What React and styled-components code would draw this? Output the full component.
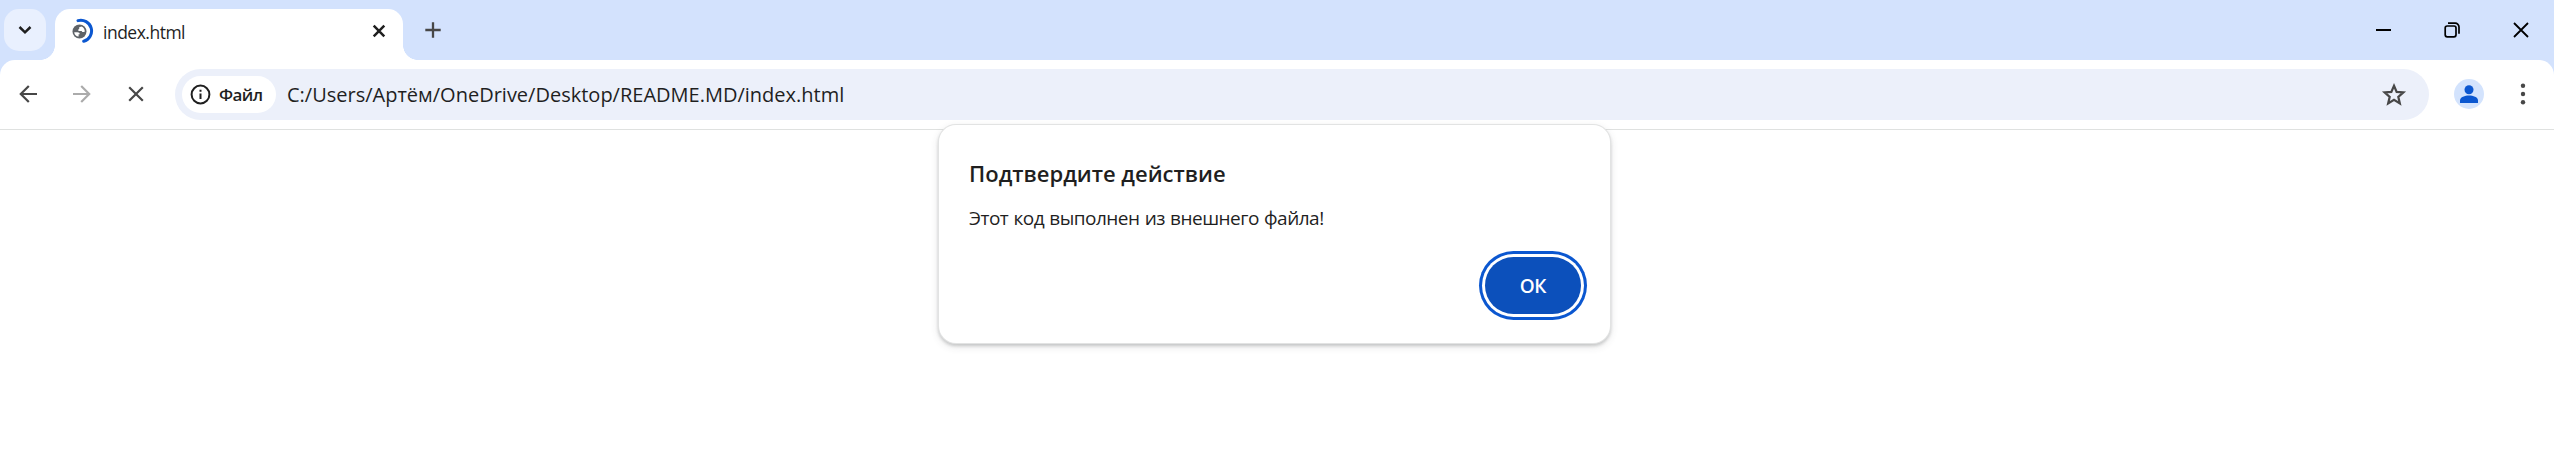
import React from "react";
import styled, { createGlobalStyle } from "styled-components";

const GlobalStyle = createGlobalStyle`
  *, *::before, *::after { box-sizing: border-box; }
  html, body { margin: 0; background: #fff; overflow: hidden; }
  body { font-family: "Segoe UI", "Open Sans", "Noto Sans", sans-serif; color: #1f1f1f; }
  button { font: inherit; color: inherit; border: 0; padding: 0; background: none; }
`;

const Window = styled.div`
  position: relative;
  height: 456px;
  background: #fff;
`;

const TabStrip = styled.header`
  display: flex;
  align-items: flex-start;
  height: 75px;
  margin-bottom: -15px;
  padding: 9px 0 0 4px;
  background: #d3e2fd;
`;

const TabSearch = styled.button`
  display: grid;
  place-items: center;
  width: 42px;
  height: 42px;
  border-radius: 15px;
  background: #e9f0fe;
`;

const Tab = styled.div`
  position: relative;
  z-index: 1;
  display: flex;
  align-items: center;
  width: 348px;
  height: 51px;
  margin-left: 9px;
  padding: 0 17px 8px 16px;
  border-radius: 15px 15px 0 0;
  background: #fff;

  &::before, &::after {
    content: "";
    position: absolute;
    bottom: 0;
    width: 15px;
    height: 15px;
  }
  &::before {
    right: 100%;
    background: radial-gradient(circle at 0 0, transparent 14.6px, #fff 15.2px);
  }
  &::after {
    left: 100%;
    background: radial-gradient(circle at 100% 0, transparent 14.6px, #fff 15.2px);
  }
`;

const TabTitle = styled.span`
  flex: 1;
  margin: 2px 0 0 8px;
  font-size: 17.5px;
  line-height: 24px;
  letter-spacing: -0.5px;
`;

const NewTab = styled.button`
  display: grid;
  place-items: center;
  width: 42px;
  height: 42px;
  margin-left: 9px;
`;

const WindowControls = styled.div`
  display: flex;
  align-items: center;
  height: 41px;
  margin-left: auto;
`;

const ControlButton = styled.button`
  display: grid;
  place-items: center;
  width: ${(p) => p.$width}px;
  height: 41px;
`;

const Toolbar = styled.nav`
  position: relative;
  display: flex;
  align-items: center;
  height: 70px;
  padding: 0 10px 1px 7px;
  border-bottom: 1px solid #dfe1e0;
  border-radius: 15px 15px 0 0;
  background: #fff;
`;

const NavButton = styled.button`
  display: grid;
  place-items: center;
  width: 42px;
  height: 42px;
  margin-right: ${(p) => p.$gap ?? 12}px;
  color: ${(p) => (p.$muted ? "#ababab" : "#474747")};
`;

const AddressBar = styled.div`
  display: flex;
  flex: 1;
  align-items: center;
  height: 51px;
  margin-top: 1px;
  padding: 0 14px 0 7px;
  border-radius: 26px;
  background: #ecf0fa;
`;

const SiteChip = styled.span`
  display: flex;
  flex: none;
  align-items: center;
  gap: 8px;
  width: 94px;
  height: 37px;
  padding-left: 8px;
  border-radius: 19px;
  background: #fff;
  font-size: 17px;
  font-weight: 600;
  letter-spacing: -0.6px;
`;

const Url = styled.span`
  flex: 1;
  margin-left: 11px;
  font-size: 20px;
  line-height: 28px;
  letter-spacing: 0;
  white-space: nowrap;
`;

const Avatar = styled.span`
  display: block;
  width: 30px;
  height: 30px;
  margin: 0 18px 0 25px;
  border-radius: 50%;
  background: #d3e3fd;
`;

const Dialog = styled.section`
  position: absolute;
  top: 125px;
  left: 939px;
  display: flex;
  flex-direction: column;
  width: 671px;
  height: 218px;
  padding: 31px 29px 29px 30px;
  border-radius: 17px;
  background: #fff;
  box-shadow: 0 0 0 1px #e2e3e3, 0 2px 3px 1px rgba(60, 64, 67, 0.2), 0 3px 8px rgba(60, 64, 67, 0.16);
`;

const DialogTitle = styled.h1`
  margin: 0;
  font-size: 22px;
  font-weight: 600;
  line-height: 34px;
  white-space: nowrap;
`;

const DialogMessage = styled.p`
  margin: 14px 0 0;
  font-size: 19px;
  line-height: 28px;
  letter-spacing: -0.5px;
  word-spacing: 0.7px;
  white-space: nowrap;
`;

const ConfirmButton = styled.button`
  && {
    align-self: flex-end;
    width: 96px;
    height: 57px;
    margin-top: auto;
    border-radius: 29px;
    background: #0c50bb;
    box-shadow: 0 0 0 3px #fff, 0 0 0 6px #0b57d0;
    color: #fff;
    font-size: 19px;
    font-weight: 600;
    letter-spacing: -0.3px;
  }
`;

const Icon = ({ w = 24, h = w, children, stroke = 2 }) => (
  <svg width={w} height={h} viewBox={`0 0 ${w} ${h}`} fill="none" stroke="currentColor" strokeWidth={stroke}>
    {children}
  </svg>
);

export default function App() {
  return (
    <>
      <GlobalStyle />
      <Window>
        <TabStrip>
          <TabSearch aria-label="Поиск вкладок">
            <Icon w={14} h={10} stroke={2.5}><path d="M1.5 2 7 7.3 12.5 2" /></Icon>
          </TabSearch>
          <Tab>
            <Icon w={24} h={26}>
              <g stroke="none">
                <circle cx="8.5" cy="13.5" r="7" fill="#5f6368" />
                <path d="M3.2 14.2H6.400C8 14.200 8.800 15 8.800 16.200H7.600V18.600C5.200 18.400 3.400 16.600 3.200 14.200ZM8.200 9.200 10.500 8.500C12.600 9.400 13.800 11.300 13.800 13.600 12.600 14.500 11.100 14.200 10.700 12.900H7.700C6.900 12.300 7.100 11.200 8.200 11Z" fill="#fff" />
              </g>
              <path d="M7 2.600A10.700 10.700 0 0 1 12.700 23.300" stroke="#0b57d0" strokeWidth="3" strokeLinecap="round" />
            </Icon>
            <TabTitle>index.html</TabTitle>
            <Icon w={14} stroke={2.5}><path d="m1.700 1.700 10.600 10.600M12.300 1.700 1.700 12.300" /></Icon>
          </Tab>
          <NewTab aria-label="Новая вкладка">
            <Icon w={16} stroke={2.3}><path d="M8 .3v15.400M.3 8h15.400" stroke="#474747" /></Icon>
          </NewTab>
          <WindowControls>
            <ControlButton $width={65} aria-label="Свернуть">
              <Icon w={15} h={2}><path d="M0 1h15" stroke="#000" /></Icon>
            </ControlButton>
            <ControlButton $width={71} aria-label="Восстановить">
              <Icon w={16} stroke={1.7}>
                <g stroke="#000"><rect x="1.200" y="4" width="10.800" height="10.800" rx="2" /><path d="M4 1.200h7.200a3.800 3.800 0 0 1 3.800 3.800v6.800" /></g>
              </Icon>
            </ControlButton>
            <ControlButton $width={67} aria-label="Закрыть">
              <Icon w={16} stroke={1.8}><path d="m1 1 14 14M15 1 1 15" stroke="#000" /></Icon>
            </ControlButton>
          </WindowControls>
        </TabStrip>
        <Toolbar>
          <NavButton aria-label="Назад">
            <Icon w={18} stroke={2.2}><path d="M18 9H2M9.800 1 1.800 9l8 8" /></Icon>
          </NavButton>
          <NavButton $muted aria-label="Вперёд">
            <Icon w={18} stroke={2.2}><path d="M0 9h16M8.200 1l8 8-8 8" /></Icon>
          </NavButton>
          <NavButton $gap={18} aria-label="Остановить загрузку">
            <Icon w={16} stroke={2.2}><path d="m1.200 1.200 13.600 13.600M14.800 1.200 1.200 14.800" /></Icon>
          </NavButton>
          <AddressBar>
            <SiteChip>
              <Icon w={21}>
                <circle cx="10.500" cy="10.500" r="8.900" />
                <path d="M10.500 9.500v5.500M10.500 5.800v2" />
              </Icon>
              Файл
            </SiteChip>
            <Url>C:/Users/Артём/OneDrive/Desktop/README.MD/index.html</Url>
            <NavButton $gap={0} aria-label="Добавить в закладки">
              <Icon w={26}>
                <path d="m13 3.700 2.650 6.150 6.750.6-5.100 4.400 1.550 6.550L13 17.900l-5.850 3.500 1.550-6.550-5.100-4.400 6.750-.6Z" strokeWidth="2.200" />
              </Icon>
            </NavButton>
          </AddressBar>
          <Avatar>
            <Icon w={30}>
              <g fill="#0b57d0" stroke="none"><circle cx="15" cy="10.700" r="4.500" /><path d="M6 24v-2.500c0-3.600 5-5 9-5s9 1.400 9 5V24Z" /></g>
            </Icon>
          </Avatar>
          <NavButton $gap={0} aria-label="Меню">
            <Icon w={6} h={22}><g fill="currentColor" stroke="none"><circle cx="3" cy="2.800" r="2.200" /><circle cx="3" cy="11" r="2.200" /><circle cx="3" cy="19.200" r="2.200" /></g></Icon>
          </NavButton>
        </Toolbar>
        <Dialog role="alertdialog">
          <DialogTitle>Подтвердите действие</DialogTitle>
          <DialogMessage>Этот код выполнен из внешнего файла!</DialogMessage>
          <ConfirmButton>ОК</ConfirmButton>
        </Dialog>
      </Window>
    </>
  );
}
